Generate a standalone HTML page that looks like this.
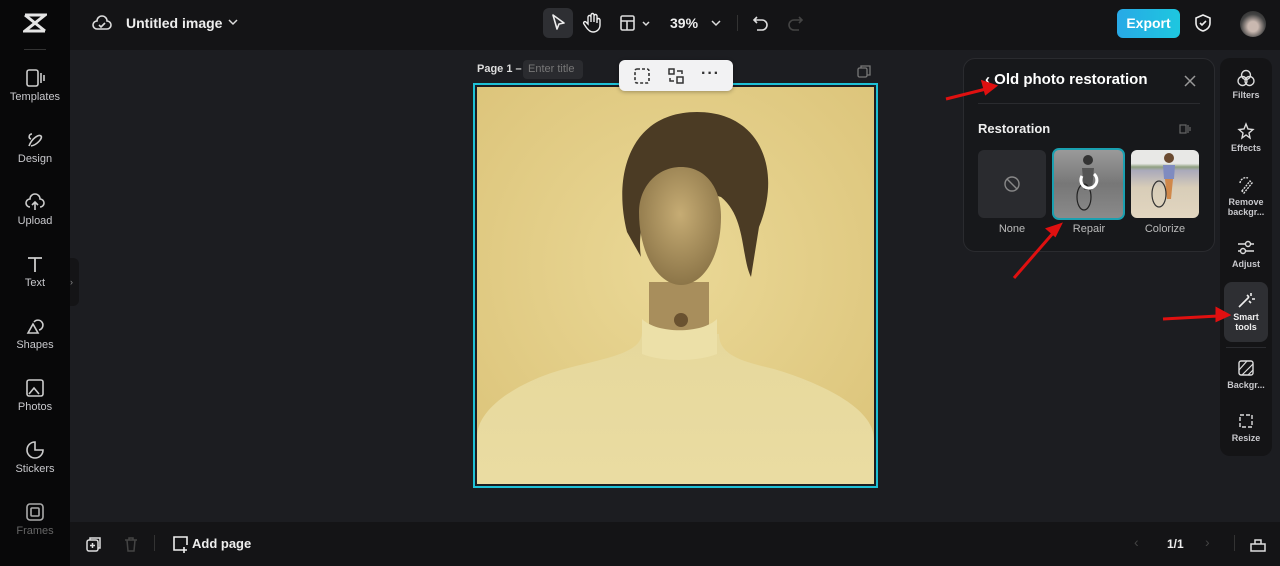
<!DOCTYPE html>
<html><head><meta charset="utf-8"><style>
*{box-sizing:border-box;margin:0;padding:0}
body{width:1280px;height:566px;overflow:hidden;background:#1c1d21;font-family:"Liberation Sans",sans-serif;color:#fff;position:relative}
.abs{position:absolute}
.side{left:0;top:0;width:70px;height:566px;background:#080809}
.top{left:70px;top:0;width:1210px;height:50px;background:#141416}
.bot{left:70px;top:522px;width:1210px;height:44px;background:#141416}
.si{position:absolute;left:0;width:70px;text-align:center;font-size:11px;color:#c8c8cc}
.si svg{display:block;margin:0 auto 3px}
.ti{position:absolute;left:1224px;width:44px;text-align:center;font-size:9px;font-weight:bold;color:#c8c8cc;line-height:10px}
.ti svg{display:block;margin:0 auto 3px}
</style></head><body>
<div class="abs side"></div>
<div class="abs top"></div>
<div class="abs bot"></div>
<svg class="abs" style="left:23px;top:13px" width="24" height="20" viewBox="0 0 24 20"><path d="M2 2h20L2 18h20M2 2l20 16" stroke="#e5e5e5" stroke-width="3" fill="none"/></svg>
<div class="abs" style="left:24px;top:49px;width:22px;height:1px;background:#333"></div>
<div class="si" style="top:68px"><svg width="22" height="20"><rect x="3" y="2" width="11" height="16" rx="2" stroke="#ccc" stroke-width="1.6" fill="none"/><path d="M17 5v10M20 7v6" stroke="#ccc" stroke-width="1.6"/></svg>Templates</div>
<div class="si" style="top:130px"><svg width="22" height="20"><path d="M5 16c3-8 10-12 12-10s-4 9-10 10M8 4c-3 0-4 4-1 5" stroke="#ccc" stroke-width="1.6" fill="none"/></svg>Design</div>
<div class="si" style="top:192px"><svg width="22" height="20"><path d="M6 15a4 4 0 0 1 0-8 5 5 0 0 1 10 0 4 4 0 0 1 0 8M11 10v8M8 13l3-3 3 3" stroke="#ccc" stroke-width="1.6" fill="none"/></svg>Upload</div>
<div class="si" style="top:254px"><svg width="22" height="20"><path d="M4 4h14M11 4v14" stroke="#ccc" stroke-width="1.8"/></svg>Text</div>
<div class="si" style="top:316px"><svg width="22" height="20"><path d="M4 17l5-9 5 9zM10 6a5 5 0 1 1 5 8" stroke="#ccc" stroke-width="1.6" fill="none"/></svg>Shapes</div>
<div class="si" style="top:378px"><svg width="22" height="20"><rect x="3" y="2" width="16" height="16" rx="2" stroke="#ccc" stroke-width="1.6" fill="none"/><path d="M5 16l5-6 5 6" stroke="#ccc" stroke-width="1.6" fill="none"/></svg>Photos</div>
<div class="si" style="top:440px"><svg width="22" height="20"><path d="M11 2a8 8 0 1 0 8 8h-8z" stroke="#ccc" stroke-width="1.6" fill="none"/></svg>Stickers</div>
<div class="si" style="top:502px;color:#666"><svg width="22" height="20"><rect x="3" y="2" width="16" height="16" rx="3" stroke="#aaa" stroke-width="1.6" fill="none"/><rect x="7" y="6" width="8" height="8" rx="1" stroke="#aaa" stroke-width="1.6" fill="none"/></svg>Frames</div>
<div class="abs" style="left:70px;top:258px;width:9px;height:48px;background:#141416;border-radius:0 6px 6px 0;font-size:9px;color:#888;line-height:48px">›</div>
<svg class="abs" style="left:91px;top:14px" width="22" height="18"><path d="M6 15a4 4 0 0 1 0-8 5 5 0 0 1 10 0 4 4 0 0 1 0 8z" stroke="#ddd" stroke-width="1.6" fill="none"/><path d="M8 11l2 2 4-4" stroke="#ddd" stroke-width="1.6" fill="none"/></svg>
<div class="abs" style="left:126px;top:15px;font-size:14px;font-weight:bold;color:#eee">Untitled image</div>
<svg class="abs" style="left:228px;top:18px" width="10" height="8"><path d="M1 2l4 4 4-4" stroke="#ddd" stroke-width="1.5" fill="none"/></svg>
<div class="abs" style="left:543px;top:8px;width:30px;height:30px;background:#2e2f33;border-radius:6px"></div>
<svg class="abs" style="left:549px;top:13px" width="18" height="20"><path d="M4 2l11 8-5 1-2 5z" stroke="#eee" stroke-width="1.6" fill="none" stroke-linejoin="round"/></svg>
<svg class="abs" style="left:582px;top:12px" width="20" height="22"><path d="M6 12V5a1.5 1.5 0 0 1 3 0v5V3a1.5 1.5 0 0 1 3 0v7V4a1.5 1.5 0 0 1 3 0v7-3a1.5 1.5 0 0 1 3 0v5c0 4-3 7-7 7-3 0-5-2-7-5l-2-3a1.3 1.3 0 0 1 2-2z" stroke="#eee" stroke-width="1.4" fill="none"/></svg>
<svg class="abs" style="left:619px;top:14px" width="36" height="18"><rect x="2" y="2" width="13" height="14" rx="1.5" stroke="#ddd" stroke-width="1.6" fill="none"/><path d="M2 7h13M8 7v9" stroke="#ddd" stroke-width="1.6"/><path d="M24 8l3 3 3-3" stroke="#ddd" stroke-width="1.5" fill="none"/></svg>
<div class="abs" style="left:670px;top:15px;font-size:14px;font-weight:bold;color:#eee">39%</div>
<svg class="abs" style="left:711px;top:19px" width="10" height="8"><path d="M1 2l4 4 4-4" stroke="#ddd" stroke-width="1.5" fill="none"/></svg>
<div class="abs" style="left:737px;top:15px;width:1px;height:16px;background:#333"></div>
<svg class="abs" style="left:752px;top:14px" width="18" height="18"><path d="M5 3L2 6l3 3M2 6h8a5 5 0 0 1 0 10H5" stroke="#ddd" stroke-width="1.6" fill="none"/></svg>
<svg class="abs" style="left:786px;top:14px" width="18" height="18"><path d="M13 3l3 3-3 3M16 6H8a5 5 0 0 0 0 10h5" stroke="#444" stroke-width="1.6" fill="none"/></svg>
<div class="abs" style="left:1117px;top:9px;width:63px;height:29px;background:linear-gradient(90deg,#28a9e6,#1ec7df);border-radius:6px;font-size:14px;font-weight:bold;text-align:center;line-height:29px">Export</div>
<svg class="abs" style="left:1194px;top:13px" width="18" height="20"><path d="M9 2l7 3v5c0 4-3 7-7 8-4-1-7-4-7-8V5z" stroke="#eee" stroke-width="1.6" fill="none"/><path d="M6 10l2 2 4-4" stroke="#eee" stroke-width="1.6" fill="none"/></svg>
<div class="abs" style="left:1240px;top:11px;width:26px;height:26px;border-radius:50%;background:radial-gradient(circle at 50% 60%,#c9b8b0 25%,#444 60%,#222)"></div>
<div class="abs" style="left:477px;top:63px;font-size:11px;font-weight:bold;color:#ddd">Page 1 –</div>
<div class="abs" style="left:523px;top:60px;width:60px;height:19px;background:#2a2b2f;border-radius:4px;font-size:11px;color:#777;line-height:19px;padding-left:5px">Enter title</div>
<svg class="abs" style="left:857px;top:64px" width="14" height="14"><rect x="1" y="4" width="9" height="9" rx="1.5" stroke="#777" stroke-width="1.3" fill="none"/><path d="M4 4V2h9v9h-3" stroke="#777" stroke-width="1.3" fill="none"/></svg>
<div class="abs" style="left:473px;top:83px;width:405px;height:405px;border:2px solid #1ec1d6;background:#1c1d21;padding:2px">
<svg width="397" height="397" viewBox="0 0 397 397" style="display:block">
<defs><radialGradient id="bg" cx="50%" cy="45%" r="70%"><stop offset="0" stop-color="#ead896"/><stop offset="1" stop-color="#dcc47a"/></radialGradient>
<radialGradient id="sk" cx="50%" cy="40%" r="60%"><stop offset="0" stop-color="#c6ac74"/><stop offset="1" stop-color="#8c7548"/></radialGradient>
<linearGradient id="dr" x1="0" y1="0" x2="0" y2="1"><stop offset="0" stop-color="#e6d89c"/><stop offset="1" stop-color="#eadca2"/></linearGradient></defs>
<rect width="397" height="397" fill="url(#bg)"/>
<path d="M150 145c-15-60 5-120 70-120s85 60 62 115l-8 50c-10-20-5-60-30-80-30-10-60-5-75 15-8 20-6 40-5 45z" fill="#4b3b24"/>
<path d="M165 245c0 20-30 25-70 35-50 12-95 40-95 70v47h397v-45c0-30-50-55-100-70-35-8-55-15-55-35z" fill="url(#dr)"/>
<path d="M172 195l0 50c10 15 50 15 60 0v-50z" fill="#a88e5c"/>
<path d="M165 232c15 15 60 15 75 0v35c-20 8-55 8-75 0z" fill="#ece0a8"/>
<path d="M162 125c0-25 18-45 42-45s40 20 40 50c0 40-18 68-40 68s-42-30-42-73z" fill="url(#sk)"/>
<circle cx="204" cy="233" r="7" fill="#6a5230"/>
</svg></div>
<div class="abs" style="left:619px;top:60px;width:114px;height:31px;background:#f2f2f3;border-radius:6px;box-shadow:0 1px 4px rgba(0,0,0,.3)"></div>
<svg class="abs" style="left:633px;top:67px" width="18" height="18"><rect x="2" y="2" width="14" height="14" rx="2" stroke="#333" stroke-width="1.6" stroke-dasharray="3 2" fill="none"/></svg>
<svg class="abs" style="left:667px;top:67px" width="18" height="18"><rect x="2" y="2" width="5" height="5" stroke="#333" stroke-width="1.5" fill="none"/><rect x="10" y="10" width="6" height="6" stroke="#333" stroke-width="1.5" fill="none"/><path d="M10 4h5v3M7 14H3v-3" stroke="#333" stroke-width="1.5" fill="none"/></svg>
<div class="abs" style="left:701px;top:65px;font-size:16px;font-weight:bold;color:#333;letter-spacing:1px">···</div>
<div class="abs" style="left:963px;top:58px;width:252px;height:194px;background:#17181b;border:1px solid #2a2b2f;border-radius:12px"></div>
<div class="abs" style="left:985px;top:71px;font-size:15px;font-weight:bold;color:#fff">‹ Old photo restoration</div>
<svg class="abs" style="left:1183px;top:74px" width="14" height="14"><path d="M2 2l10 10M12 2L2 12" stroke="#999" stroke-width="1.5"/></svg>
<div class="abs" style="left:978px;top:103px;width:222px;height:1px;background:#2a2b2f"></div>
<div class="abs" style="left:978px;top:121px;font-size:13px;font-weight:bold;color:#eee">Restoration</div>
<svg class="abs" style="left:1179px;top:123px" width="14" height="12"><rect x="1" y="2" width="6" height="8" stroke="#666" stroke-width="1.2" fill="none"/><path d="M9 2v8M11 4v4" stroke="#666" stroke-width="1.2"/></svg>
<div class="abs" style="left:978px;top:150px;width:68px;height:68px;background:#2a2b2f;border-radius:6px"></div>
<svg class="abs" style="left:1003px;top:175px" width="18" height="18"><circle cx="9" cy="9" r="7" stroke="#888" stroke-width="1.4" fill="none"/><path d="M4 4l10 10" stroke="#888" stroke-width="1.4"/></svg>
<div class="abs" style="left:1052px;top:148px;width:73px;height:72px;border:2px solid #1aa0b0;border-radius:7px;background:linear-gradient(#9a9a9a,#777 50%,#8a8a8a);overflow:hidden">
<svg width="69" height="68"><circle cx="34" cy="10" r="5" fill="#333"/><path d="M28 18h12l-2 22h-8z" fill="#555"/><ellipse cx="30" cy="47" rx="7" ry="13" stroke="#222" stroke-width="1.2" fill="none"/><path d="M28 26a8 8 0 1 0 12 -2" stroke="#fff" stroke-width="3" fill="none"/></svg></div>
<div class="abs" style="left:1131px;top:150px;width:68px;height:68px;border-radius:6px;background:linear-gradient(#e8e8e6 0 20%,#8fa080 25%,#aab 30%,#d8cdb8 55%,#e2d6c0);overflow:hidden">
<svg width="68" height="68"><circle cx="38" cy="8" r="5" fill="#6a4a30"/><path d="M32 15h12l-1 14h-10z" fill="#7f8bc0"/><path d="M34 29h8l-2 20h-4z" fill="#d0884a"/><ellipse cx="28" cy="44" rx="7" ry="13" stroke="#333" stroke-width="1.2" fill="none"/></svg></div>
<div class="abs" style="left:978px;top:223px;width:68px;text-align:center;font-size:11px;color:#bbb">None</div>
<div class="abs" style="left:1054px;top:223px;width:70px;text-align:center;font-size:11px;color:#bbb">Repair</div>
<div class="abs" style="left:1131px;top:223px;width:68px;text-align:center;font-size:11px;color:#bbb">Colorize</div>
<div class="abs" style="left:1220px;top:58px;width:52px;height:398px;background:#141416;border-radius:10px"></div>
<div class="abs" style="left:1224px;top:282px;width:44px;height:60px;background:#2e2f33;border-radius:8px"></div>
<div class="abs" style="left:1226px;top:347px;width:40px;height:1px;background:#2a2b2f"></div>
<div class="ti" style="top:69px"><svg width="20" height="18"><circle cx="10" cy="6" r="4.5" stroke="#ddd" stroke-width="1.4" fill="none"/><circle cx="6.5" cy="12" r="4.5" stroke="#ddd" stroke-width="1.4" fill="none"/><circle cx="13.5" cy="12" r="4.5" stroke="#ddd" stroke-width="1.4" fill="none"/></svg>Filters</div>
<div class="ti" style="top:122px"><svg width="20" height="18"><path d="M10 2l2 5 5 .5-4 3.5 1 5-4-3-4 3 1-5-4-3.5 5-.5z" stroke="#ddd" stroke-width="1.4" fill="none"/></svg>Effects</div>
<div class="ti" style="top:176px"><svg width="20" height="18"><path d="M6 15l8-10 2 2-8 10zM4 7a6 6 0 0 1 8-5" stroke="#ddd" stroke-width="1.4" fill="none" stroke-dasharray="2 1"/></svg>Remove<br>backgr...</div>
<div class="ti" style="top:238px"><svg width="20" height="18"><path d="M2 6h16M2 13h16" stroke="#ddd" stroke-width="1.4"/><circle cx="12" cy="6" r="2.5" fill="#141416" stroke="#ddd" stroke-width="1.4"/><circle cx="7" cy="13" r="2.5" fill="#141416" stroke="#ddd" stroke-width="1.4"/></svg>Adjust</div>
<div class="ti" style="top:291px;color:#eee"><svg width="20" height="18"><path d="M3 16L13 6M11 4l2 2M15 2v3M16 8h3M13 10l2 2" stroke="#eee" stroke-width="1.6" fill="none"/></svg>Smart<br>tools</div>
<div class="ti" style="top:359px"><svg width="20" height="18"><rect x="3" y="2" width="14" height="14" rx="2" stroke="#ddd" stroke-width="1.4" fill="none"/><path d="M3 11l8-9M6 16l11-11M12 16l5-5" stroke="#ddd" stroke-width="1.2"/></svg>Backgr...</div>
<div class="ti" style="top:412px"><svg width="20" height="18"><rect x="4" y="3" width="12" height="12" stroke="#ddd" stroke-width="1.4" fill="none" stroke-dasharray="4 2"/></svg>Resize</div>
<svg class="abs" style="left:0;top:0" width="1280" height="566">
<g stroke="#e01010" stroke-width="3" fill="#e01010">
<path d="M946 99l40-10"/><path d="M995 86l-12-4 3 11z"/>
<path d="M1014 278l40-46"/><path d="M1060 225l-12 4 7 6z"/>
<path d="M1163 319l55-3"/><path d="M1228 315l-11-6 0 11z"/>
</g></svg>
<svg class="abs" style="left:85px;top:535px" width="18" height="18"><rect x="2" y="5" width="11" height="11" rx="2" stroke="#ddd" stroke-width="1.5" fill="none"/><path d="M5 5V3h10v10h-2M7.5 8v5M5 10.5h5" stroke="#ddd" stroke-width="1.5" fill="none"/></svg>
<svg class="abs" style="left:123px;top:535px" width="16" height="18"><path d="M2 5h12M6 5V3h4v2M4 5l1 11h6l1-11" stroke="#444" stroke-width="1.5" fill="none"/></svg>
<div class="abs" style="left:154px;top:535px;width:1px;height:16px;background:#333"></div>
<svg class="abs" style="left:171px;top:535px" width="18" height="18"><path d="M10 15H3V2h13v8M13 12v6M10 15h6" stroke="#eee" stroke-width="1.6" fill="none"/></svg>
<div class="abs" style="left:192px;top:536px;font-size:13px;font-weight:bold;color:#eee">Add page</div>
<div class="abs" style="left:1134px;top:534px;font-size:14px;color:#444">‹</div>
<div class="abs" style="left:1167px;top:537px;font-size:12px;font-weight:bold;color:#eee">1/1</div>
<div class="abs" style="left:1205px;top:534px;font-size:14px;color:#444">›</div>
<div class="abs" style="left:1234px;top:535px;width:1px;height:16px;background:#333"></div>
<svg class="abs" style="left:1249px;top:535px" width="18" height="18"><path d="M2 9h14v7H2zM6 9V5h6v4" stroke="#ddd" stroke-width="1.5" fill="none"/></svg>
</body></html>
